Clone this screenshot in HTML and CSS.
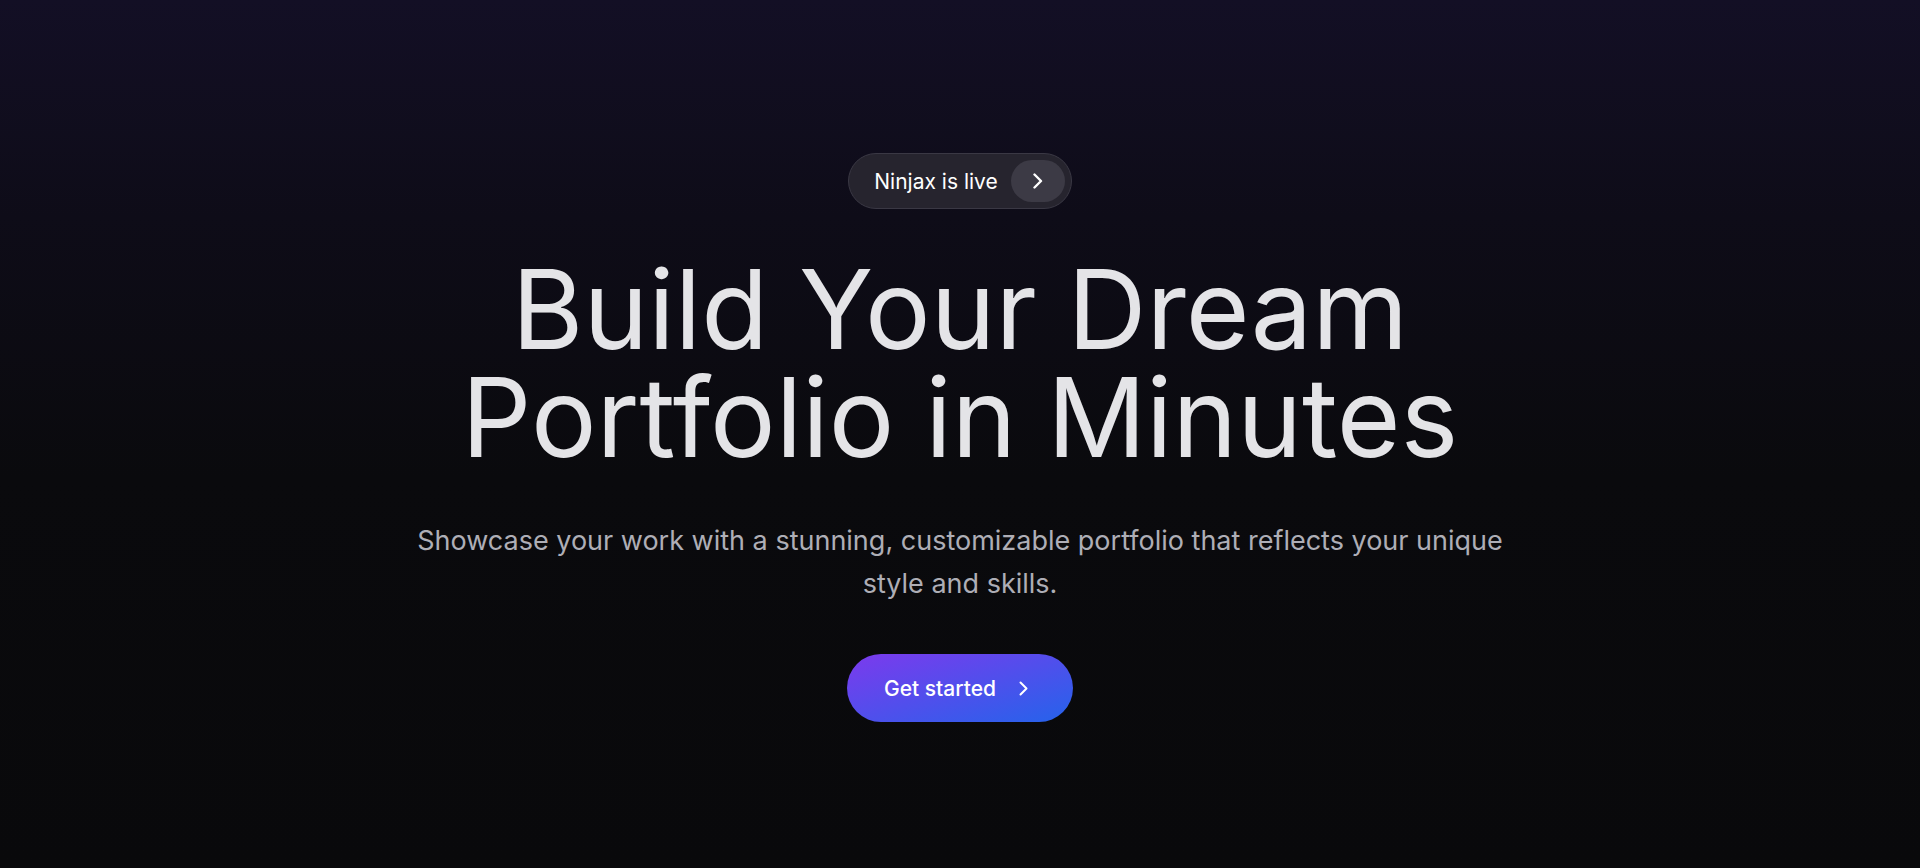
FILE: index.html
```html
<!DOCTYPE html>
<html lang="en">
<head>
<meta charset="utf-8">
<title>Ninjax</title>
<link rel="stylesheet" href="styles.css">
</head>
<body>
<main class="hero">
  <a class="badge" href="#">
    <span class="badge-text">Ninjax is live</span>
    <span class="badge-icon">
      <svg width="12" height="16" viewBox="0 0 12 16" fill="none" stroke="#fff" stroke-width="2.4" stroke-linecap="round" stroke-linejoin="round"><path d="M2.5 1.5 L9 8 L2.5 14.5"/></svg>
    </span>
  </a>
  <h1 class="title">Build Your Dream Portfolio in Minutes</h1>
  <p class="lead">Showcase your work with a stunning, customizable portfolio that reflects your unique style and skills.</p>
  <a class="cta" href="#">
    <span>Get started</span>
    <svg width="11" height="15" viewBox="0 0 11 15" fill="none" stroke="#fff" stroke-width="2" stroke-linecap="round" stroke-linejoin="round"><path d="M2.5 1.5 L8.5 7.5 L2.5 13.5"/></svg>
  </a>
</main>
</body>
</html>
```
FILE: styles.css
```css
html, body {
  margin: 0;
  padding: 0;
}
body {
  min-height: 100vh;
  background: linear-gradient(to bottom, #130f25 0%, #0e0c18 25%, #0a0a0d 55%, #09090b 100%);
  font-family: Inter, "Noto Sans", sans-serif;
  color: #e4e4e7;
}
.hero {
  display: flex;
  flex-direction: column;
  align-items: center;
  text-align: center;
  padding-top: 153px;
}
.badge {
  display: flex;
  align-items: center;
  gap: 13px;
  padding: 6px 6px 6px 25px;
  border: 1px solid #3a3844;
  border-radius: 999px;
  background: #26242e;
  text-decoration: none;
  color: #fff;
  font-size: 21px;
  font-weight: 400;
  line-height: 1;
}
.badge-icon {
  display: flex;
  align-items: center;
  justify-content: center;
  width: 54px;
  height: 42px;
  border-radius: 999px;
  background: #3c3a45;
}
.title {
  margin: 46px 0 0;
  max-width: 1100px;
  font-size: 109.5px;
  line-height: 108px;
  font-weight: 400;
  letter-spacing: 0;
  color: #e4e4e7;
}
.lead {
  margin: 48px 0 0;
  max-width: 1110px;
  font-size: 27px;
  line-height: 43px;
  color: #aeaeb6;
}
.cta {
  margin-top: 49px;
  display: flex;
  align-items: center;
  gap: 22px;
  height: 68px;
  box-sizing: border-box;
  padding: 0 44px 0 37px;
  border-radius: 999px;
  background: linear-gradient(to bottom right, #7c3aed, #2563eb);
  color: #fff;
  text-decoration: none;
  font-size: 21px;
  font-weight: 500;
}
```
